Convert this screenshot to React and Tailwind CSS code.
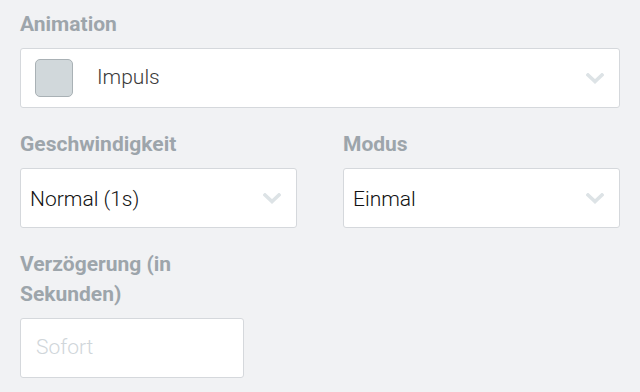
import React from "react";

const Chevron = () => (
  <svg width="18" height="11" viewBox="0 0 18 11" className="shrink-0">
    <polyline points="2,2 9,8.5 16,2" fill="none" stroke="#dde3e6" strokeWidth="3.6" strokeLinecap="square" strokeLinejoin="miter" />
  </svg>
);

const Label = ({ children, className = "" }) => (
  <div className={"text-[21px] leading-[30px] font-bold text-[#9da5ab] mb-[9px] " + className}>{children}</div>
);

export default function App() {
  return (
    <div
      className="w-[640px] h-[392px] bg-[#f1f2f4] px-5 pt-[9px] overflow-hidden"
      style={{ fontFamily: "Roboto, 'Liberation Sans', sans-serif" }}
    >
      <div className="flex flex-col gap-[21px]">
        <div>
          <Label>Animation</Label>
          <div className="h-[60px] bg-white border border-[#d5d8dc] rounded-[3px] flex items-center pl-[14px] pr-[15px]">
            <div className="w-[38px] h-[38px] rounded-[5px] bg-[#d1d8db] border border-[#a9b1b5]" />
            <span className="ml-6 text-[21px] font-light text-[#3a3a3a] flex-1">Impuls</span>
            <Chevron />
          </div>
        </div>

        <div className="grid grid-cols-2 gap-[46px]">
          <div>
            <Label>Geschwindigkeit</Label>
            <div className="h-[60px] bg-white border border-[#d5d8dc] rounded-[3px] flex items-center pl-[9px] pr-[15px]">
              <span className="pt-[3px] text-[21px] font-light text-[#111] flex-1">Normal (1s)</span>
              <Chevron />
            </div>
          </div>
          <div>
            <Label>Modus</Label>
            <div className="h-[60px] bg-white border border-[#d5d8dc] rounded-[3px] flex items-center pl-[9px] pr-[15px]">
              <span className="pt-[3px] text-[21px] font-light text-[#111] flex-1">Einmal</span>
              <Chevron />
            </div>
          </div>
        </div>

        <div className="w-[224px]">
          <Label>Verzögerung (in Sekunden)</Label>
          <div className="h-[60px] bg-white border border-[#d5d8dc] rounded-[3px] flex items-center pl-[15px]">
            <span className="text-[21px] font-light text-[#d0d6da]">Sofort</span>
          </div>
        </div>
      </div>
    </div>
  );
}
